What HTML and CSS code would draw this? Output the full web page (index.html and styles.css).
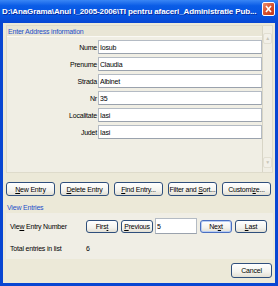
FILE: index.html
```html
<!DOCTYPE html>
<html lang="en">
<head>
  <meta charset="UTF-8" />
  <title>Address Book</title>
  <link rel="stylesheet" href="styles.css">
</head>
<body>

  <div class="window">

    <!-- Title bar -->
    <div class="titlebar">
      <span class="title">D:\AnaGrama\Anul I_2005-2006\TI pentru afaceri_Administratie Pub...</span>
      <span class="close-btn">
        <svg width="13" height="14" viewBox="0 0 13 14">
          <path d="M4 4 L9 10 M9 4 L4 10" stroke="#fff" stroke-width="1.6" fill="none" />
        </svg>
      </span>
    </div>

    <div class="client">

      <!-- Address fields -->
      <div class="address-panel">
        <div class="address-content">
          <div class="section-head">Enter Address information</div>
          <div class="fields">
            <label>Nume</label><input type="text" value="Iosub">
            <label>Prenume</label><input type="text" value="Claudia">
            <label>Strada</label><input type="text" value="Albinet">
            <label>Nr</label><input type="text" value="35">
            <label>Localitate</label><input type="text" value="Iasi">
            <label>Judet</label><input type="text" value="Iasi">
          </div>
        </div>
        <div class="scrollbar">
          <span class="scroll-arrow">&#9650;</span>
          <span class="scroll-arrow">&#9660;</span>
        </div>
      </div>

      <div class="actions">
        <button class="btn wide"><u>N</u>ew Entry</button>
        <button class="btn wide"><u>D</u>elete Entry</button>
        <button class="btn wide"><u>F</u>ind Entry...</button>
        <button class="btn wide">Filter and <u>S</u>ort...</button>
        <button class="btn wide">Customi<u>z</u>e...</button>
      </div>

      <!-- View entries -->
      <div class="section-head view-head">View Entries</div>
      <div class="view-panel">
        <div class="nav-row">
          <span class="row-label">Vie<u>w</u> Entry Number</span>
          <button class="btn nav">Firs<u>t</u></button>
          <button class="btn nav"><u>P</u>revious</button>
          <input type="text" class="entry-num" value="5">
          <button class="btn nav next">Ne<u>x</u>t</button>
          <button class="btn nav"><u>L</u>ast</button>
        </div>
        <div class="total-row">
          <span class="row-label">Total entries in list</span>
          <span>6</span>
        </div>
      </div>

      <div class="footer">
        <button class="btn cancel">Cancel</button>
      </div>

    </div>
  </div>

</body>
</html>
```

FILE: styles.css
```css
body {
  margin: 0;
  font-family: "Liberation Sans", Arial, sans-serif;
  font-size: 7px;
  letter-spacing: -0.2px;
  color: #000;
}

.window {
  width: 278px;
  height: 286px;
  display: flex;
  flex-direction: column;
  background-color: #0846d2;
}

/* Title bar */
.titlebar {
  height: 23px;
  display: flex;
  align-items: center;
  gap: 4px;
  padding: 0 3px 0 2px;
  background: linear-gradient(#3a86f5 0%, #0a5ce6 25%, #0553e0 70%, #0846d2 100%);
}
.title {
  flex: 1;
  min-width: 0;
  overflow: hidden;
  color: white;
  font-weight: bold;
  font-size: 8px;
  letter-spacing: -0.12px;
  white-space: nowrap;
  text-shadow: 1px 1px 0 #0b2a9e;
}
.close-btn {
  flex: none;
  width: 13px;
  height: 14px;
  margin-top: -5px;
  border: 1px solid white;
  border-radius: 2px;
  box-sizing: border-box;
  background: linear-gradient(135deg, #eb9073, #d8502c 50%, #c0371a);
  display: flex;
}
.close-btn svg {
  margin: -1px;
}

.client {
  flex: 1;
  margin: 0 3px 3px;
  padding: 2px 2px 0 3px;
  background-color: #ece9d8;
  display: flex;
  flex-direction: column;
}

/* Address panel */
.address-panel {
  height: 148px;
  display: flex;
  background-color: #f0eee4;
  border: 1px solid #dedbcb;
  box-sizing: border-box;
}
.address-content {
  flex: 1;
  border-right: 1px solid #d8d5c6;
}
.section-head {
  color: #1d4fc9;
  line-height: 9px;
  height: 9px;
  padding-left: 1px;
}
.address-content .section-head {
  background-color: #e9e6d6;
  border-bottom: 1px solid #faf9f4;
  padding-top: 1px;
}
.fields {
  display: grid;
  grid-template-columns: 90px 164px;
  column-gap: 1px;
  row-gap: 3px;
  margin-top: 3px;
  align-items: center;
}
.fields label {
  text-align: right;
}
input {
  font-family: inherit;
  font-size: 7px;
  letter-spacing: -0.2px;
  height: 14px;
  box-sizing: border-box;
  padding: 0 1px;
  border: 1px solid #b4bbc4;
  border-bottom-color: #9aa2ad;
  background-color: white;
  outline: none;
}

.scrollbar {
  width: 10px;
  display: flex;
  flex-direction: column;
  justify-content: space-between;
  padding: 7px 0 4px;
}
.scroll-arrow {
  height: 9px;
  font-size: 5px;
  line-height: 9px;
  text-align: center;
  color: #c9c6b8;
  background-color: #f2f0e8;
  border: 1px solid #e2dfd2;
  border-radius: 2px;
}

/* Buttons */
.btn {
  font-family: inherit;
  font-size: 7px;
  letter-spacing: -0.2px;
  white-space: nowrap;
  padding: 0;
  color: #000;
  background: linear-gradient(#ffffff, #f4f3ee 60%, #e2dfd3);
  border: 1px solid #2f4f7c;
  border-radius: 3px;
  box-sizing: border-box;
}
.actions {
  display: flex;
  gap: 5px;
  margin-top: 9px;
}
.btn.wide {
  width: 49px;
  height: 14px;
}

.view-head {
  margin-top: 7px;
}
.view-panel {
  margin-top: 1px;
  padding: 5px 0 6px 4px;
  background-color: #f0eee5;
}
.nav-row {
  display: flex;
  align-items: center;
  height: 16px;
}
.row-label {
  width: 76px;
}
.btn.nav {
  width: 32px;
  height: 13px;
  margin-right: 3px;
}
.btn.next {
  border-color: #4a6fc0;
  box-shadow: inset 0 0 0 1px #b9cdf3;
}
.entry-num {
  width: 42px;
  height: 16px;
  margin-left: -1px;
  margin-right: 3px;
}
.total-row {
  display: flex;
  margin-top: 10px;
  line-height: 9px;
}

.footer {
  display: flex;
  justify-content: flex-end;
  margin-top: 4px;
  padding-right: 1px;
}
.btn.cancel {
  width: 41px;
  height: 15px;
}
```
